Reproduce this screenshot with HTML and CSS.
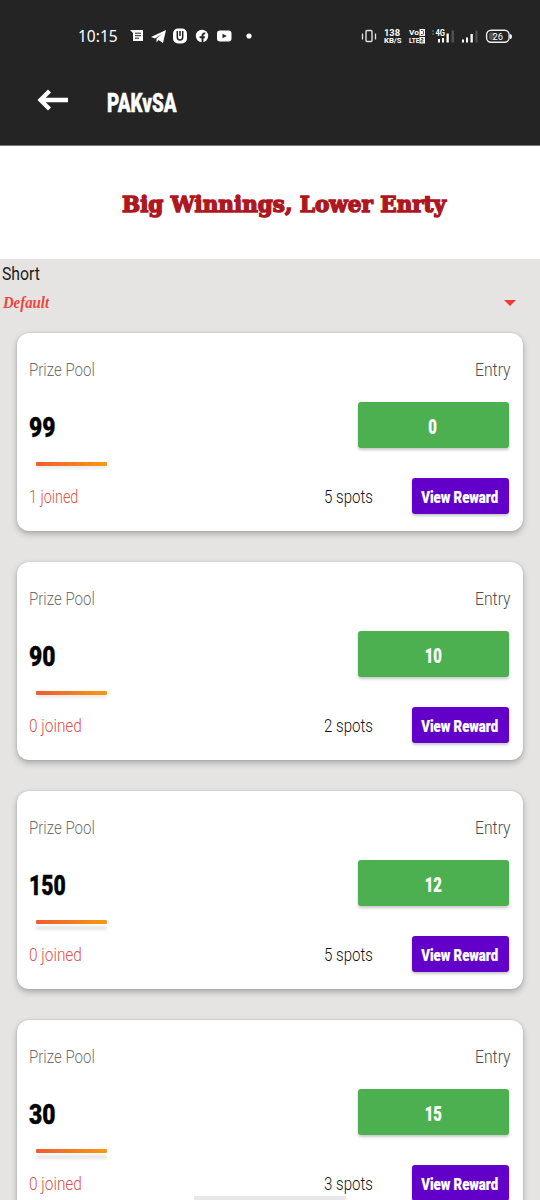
FILE: index.html
```html
<!DOCTYPE html>
<html lang="en">
<head>
<meta charset="utf-8">
<title>PAKvSA</title>
<link rel="stylesheet" href="styles.css">
</head>
<body>
<div class="screen">
  <header class="top">
    <div class="status">
      <span class="clock">10:15</span>
      <svg class="notes" width="130" height="20" viewBox="0 0 130 20" fill="#fff">
        <path d="M0 4h13v11H3V7z"/><path d="M5 7.2h6M5 9.7h6M5 12.2h4" stroke="#242424" stroke-width="1"/>
        <path d="M21 11 36 4 33 17 28.500 14 26.500 16.500V12.500L32 8 25 12.500Z"/>
        <rect x="43" y="2.500" width="14" height="15" rx="5"/><path d="M47.300 5v6q0 3 2.700 3t2.700-3V5M50 5v5" fill="none" stroke="#242424" stroke-width="1.500"/>
        <circle cx="72" cy="10" r="6.200"/><path d="M72.500 16.500v-6.500q0-3 2.800-2.600M69.600 11.200h5.200" fill="none" stroke="#242424" stroke-width="1.900"/>
        <rect x="87" y="4.500" width="14.500" height="11" rx="3"/><path d="m92.500 7.700 4.300 2.300-4.300 2.300z" fill="#242424"/>
        <circle cx="119" cy="10" r="2.600"/>
      </svg>
      <svg class="signals" width="154" height="20" viewBox="0 0 154 20" fill="#fff">
        <g fill="none" stroke="#e0e0e0"><rect x="5" y="4.500" width="6" height="11" rx="1" stroke-width="1.400"/><path d="M1.500 7.500v6M14.500 7.500v6" stroke-width="1.300"/></g>
        <g class="tiny"><text x="23" y="9.600" font-size="9.500" textLength="16" lengthAdjust="spacingAndGlyphs">138</text><text x="23" y="17.200" font-size="7.500" textLength="17.500" lengthAdjust="spacingAndGlyphs">KB/S</text>
        <text x="48" y="9.300" font-size="8" textLength="10" lengthAdjust="spacingAndGlyphs">Vo</text><text x="48" y="17.400" font-size="7.500" textLength="10.500" lengthAdjust="spacingAndGlyphs">LTE</text>
        <rect x="58.500" y="3" width="5.500" height="7"/><rect x="58.500" y="11" width="5.500" height="6.500"/><path d="M60 4.500h1.500q1 0 1 1v2q0 1-1 1H60M60 12.500h2v1.700h-2v1.700h2.500" fill="none" stroke="#242424" stroke-width=".8"/>
        <text x="74.500" y="9.500" font-size="8.500" textLength="9.500" lengthAdjust="spacingAndGlyphs">4G</text></g>
        <path d="M71 5h2M71 8h2" stroke="#777"/>
        <path d="M77 13h2v3.500h-2zM81 12h2v4.500h-2zM85.500 7.500h2.300v9h-2.300zM101 13.500h2v3h-2zM105 11.500h2v5h-2zM109.500 8h2.300v8.500h-2.300z"/>
        <path d="M90.500 4.500H93v12h-2.500zM114.500 4.500h2v12h-2z" fill="#505050"/>
        <rect x="125.600" y="4.200" width="22.500" height="12" rx="4.500" fill="none" stroke="#eee" stroke-width="1.400"/><rect x="128" y="6.500" width="6" height="7.500" rx="2" fill="#555"/><path d="M149 8q2 0 2 2.500t-2 2.500z"/>
        <text class="battery" x="131.500" y="13.500" font-size="9" textLength="10.500" lengthAdjust="spacingAndGlyphs">26</text>
      </svg>
    </div>
    <div class="appbar">
      <svg width="32" height="22" viewBox="0 0 32 22" fill="none" stroke="#fff" stroke-width="4.300"><path d="M31 11H4M12.500 2 3.500 11l9 9"/></svg>
      <h1 class="title"><span>PAKvSA</span></h1>
    </div>
  </header>
  <div class="banner"><span class="slogan">Big Winnings, Lower Enrty</span></div>
  <main class="content">
    <div class="sort">
      <label class="sort-label"><span>Short</span></label>
      <div class="select"><span class="value">Default</span><i class="caret"></i></div>
    </div>
    <section class="list">
      <article class="card">
        <div class="row head"><span class="light pool">Prize Pool</span><span class="light entry">Entry</span></div>
        <div class="row prize"><span class="amount">99</span><button class="fee"><span>0</span></button></div>
        <div class="progress"></div>
        <div class="row foot"><span class="light joined one">1 joined</span><span class="light spots">5 spots</span><button class="reward"><span>View Reward</span></button></div>
      </article>
      <article class="card">
        <div class="row head"><span class="light pool">Prize Pool</span><span class="light entry">Entry</span></div>
        <div class="row prize"><span class="amount">90</span><button class="fee"><span>10</span></button></div>
        <div class="progress"></div>
        <div class="row foot"><span class="light joined">0 joined</span><span class="light spots">2 spots</span><button class="reward"><span>View Reward</span></button></div>
      </article>
      <article class="card">
        <div class="row head"><span class="light pool">Prize Pool</span><span class="light entry">Entry</span></div>
        <div class="row prize"><span class="amount long">150</span><button class="fee"><span>12</span></button></div>
        <div class="progress raised"></div>
        <div class="row foot"><span class="light joined">0 joined</span><span class="light spots">5 spots</span><button class="reward"><span>View Reward</span></button></div>
      </article>
      <article class="card">
        <div class="row head"><span class="light pool">Prize Pool</span><span class="light entry">Entry</span></div>
        <div class="row prize"><span class="amount">30</span><button class="fee"><span>15</span></button></div>
        <div class="progress raised"></div>
        <div class="row foot"><span class="light joined">0 joined</span><span class="light spots">3 spots</span><button class="reward"><span>View Reward</span></button></div>
      </article>
    </section>
  </main>
  <div class="gesture"></div>
</div>
</body>
</html>
```
FILE: styles.css
```css
* { box-sizing: border-box; }
body { margin: 0; font-family: Roboto, "Liberation Sans", sans-serif; }
.screen { position: relative; width: 540px; height: 1200px; overflow: hidden; background: #e5e4e2; }
.top { height: 146px; background: #242424; border-bottom: 1px solid #777; color: #fff; }
.status { display: flex; align-items: center; height: 72px; padding: 0 25px 0 78px; }
.clock { width: 52px; font: 15.5px/20px "Noto Sans", sans-serif; }
.signals { margin-left: auto; }
.tiny { font-family: Roboto, sans-serif; font-weight: 700; }
.battery { font-family: Roboto, sans-serif; }
.appbar { display: flex; align-items: center; height: 56px; padding-left: 37px; }
.title { margin: 5px 0 0 38px; font-size: 25.5px; line-height: 30px; font-weight: 900; -webkit-text-stroke: 0.4px #fff; }
.title span { display: block; transform: scaleX(0.74); transform-origin: left; }
.banner { height: 113px; background: #fff; padding: 43px 0 0 122px; }
.slogan { display: inline-block; white-space: nowrap; font: bold 22.5px/30px "DejaVu Serif", serif; color: #ae171e; -webkit-text-stroke: 1.5px #ae171e; transform: scaleX(0.955); transform-origin: left; }
.sort { height: 74px; padding: 5px 24px 0 2px; }
.sort-label { display: block; font-size: 17.5px; line-height: 20px; color: #1c1c1c; }
.sort-label span { display: inline-block; transform: scaleX(0.9); transform-origin: left; }
.select { display: flex; align-items: center; justify-content: space-between; height: 37px; }
.value { padding-left: 1px; color: #ec453d; font: italic bold 16.5px/20px "Liberation Serif", serif; transform: scaleX(0.9); transform-origin: left; }
.caret { border: 6px solid transparent; border-top-color: #ef3c36; border-bottom: 0; }
.list { display: flex; flex-direction: column; gap: 31px; padding: 0 17px; }
.card { flex: none; height: 198px; padding: 0 12px; border-radius: 12px; background: #fff; box-shadow: 0 3px 6px rgba(0,0,0,.26), 0 0 2px rgba(0,0,0,.16); }
.row { display: flex; align-items: center; justify-content: space-between; white-space: nowrap; }
.head { height: 69px; padding-top: 4px; }
.light { font-size: 17.5px; font-weight: 350; line-height: 20px; transform-origin: left; }
.pool { color: #707070; transform: scaleX(0.86); }
.entry { color: #4c4c4c; transform: scaleX(0.9); transform-origin: right; }
.prize { height: 46px; padding-right: 2.5px; }
.amount { padding-top: 6px; font-size: 28.5px; font-weight: 900; line-height: 34px; color: #000; -webkit-text-stroke: 0.4px #000; transform: scaleX(0.8); transform-origin: left; }
.long { transform: scaleX(0.74); }
button { border: 0; padding: 0; border-radius: 3px; color: #fff; font-family: Roboto, sans-serif; font-weight: 900; box-shadow: 0 2px 3px rgba(0,0,0,.22); }
button span { display: inline-block; -webkit-text-stroke: 0.2px #fff; }
.fee { width: 151px; height: 46px; background: #4caf50; font-size: 19.5px; padding-top: 4px; }
.fee span { transform: scaleX(0.76); }
.progress { width: 71px; height: 4px; margin: 14px 0 12px 7px; background: linear-gradient(90deg, #f15b30, #f59a12); border-radius: 1px; box-shadow: 0 3px 3px rgba(0,0,0,.08); }
.raised { box-shadow: 0 6px 3px rgba(0,0,0,.1); }
.foot { display: grid; grid-template-columns: 295px 87.5px 97px; justify-content: start; height: 36px; }
.joined { color: #e1504a; transform: scaleX(0.88); padding-top: 1px; }
.one { transform: scaleX(0.82); }
.spots { transform: scaleX(0.86); padding-top: 1px; color: #111; }
.reward { height: 36px; background: #6200ca; font-size: 17px; display: flex; justify-content: center; align-items: center; }
.reward span { transform: scaleX(0.775); padding-top: 2px; }
.gesture { position: absolute; left: 194px; bottom: 0; width: 152px; height: 4px; background: #e8e8e8; }
```
